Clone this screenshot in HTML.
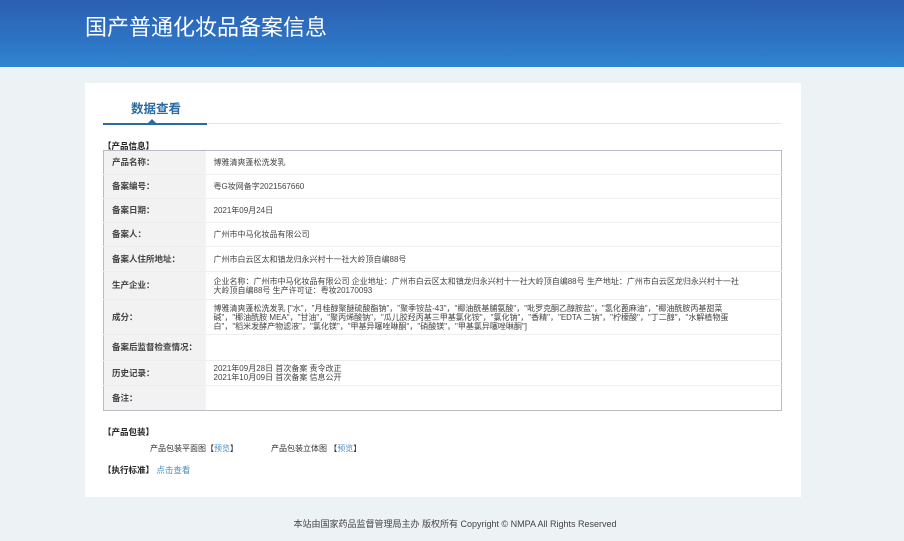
<!DOCTYPE html>
<html><head><meta charset="utf-8"><style>
*{margin:0;padding:0;box-sizing:border-box}
body{width:904px;height:541px;background:#edf2f4;font-family:"Liberation Sans","Noto Sans CJK SC",sans-serif;color:#333;position:relative;overflow:hidden}
.hd{position:absolute;left:0;top:0;width:904px;height:67px;background:linear-gradient(180deg,#2c5fb0 0%,#2d73c4 60%,#2e86d0 100%)}
.hd h1{position:absolute;left:85px;top:10px;font-size:22px;font-weight:normal;color:#fff;letter-spacing:0px}
.panel{position:absolute;left:85px;top:83px;width:716px;height:414px;background:#fff}
.tab{position:absolute;left:131px;top:98px;font-size:12.5px;font-weight:bold;color:#2d6aa3}
.tl{position:absolute;left:103px;top:123px;width:678px;height:1px;background:#e2e6ea}
.tl2{position:absolute;left:103px;top:123px;width:104px;height:2px;background:#2d6aa3}
.tri{position:absolute;left:148px;top:119px;width:0;height:0;border-left:4px solid transparent;border-right:4px solid transparent;border-bottom:4px solid #2d6aa3}
.sec{position:absolute;font-size:8.5px;font-weight:bold;color:#222}
table{position:absolute;left:103px;top:150px;width:679px;border-collapse:collapse;border:1px solid #b9bcc4;font-size:8px}
td{border-bottom:1px solid #eceef0;vertical-align:middle;line-height:9px}
td.l{width:102px;background:#f2f2f2;font-weight:bold;padding-left:8px;color:#444;font-size:8.5px}
td.v{padding-left:8px;padding-right:40px;color:#444}
a{color:#4a8fc7;text-decoration:none}
.ft{position:absolute;left:0;top:517px;width:904px;text-align:center;font-size:9px;color:#444;padding-left:6px}
</style></head><body>
<div class="hd"><h1>国产普通化妆品备案信息</h1></div>
<div class="panel"></div>
<div class="tab">数据查看</div>
<div class="tl"></div><div class="tl2"></div><div class="tri"></div>
<div class="sec" style="left:103px;top:140px">【产品信息】</div>
<table>
<tr style="height:24px"><td class="l">产品名称：</td><td class="v">博雅清爽蓬松洗发乳</td></tr>
<tr style="height:24px"><td class="l">备案编号：</td><td class="v">粤G妆网备字2021567660</td></tr>
<tr style="height:24px"><td class="l">备案日期：</td><td class="v">2021年09月24日</td></tr>
<tr style="height:24px"><td class="l">备案人：</td><td class="v">广州市中马化妆品有限公司</td></tr>
<tr style="height:25px"><td class="l">备案人住所地址：</td><td class="v">广州市白云区太和镇龙归永兴村十一社大岭顶自编88号</td></tr>
<tr style="height:28px"><td class="l">生产企业：</td><td class="v">企业名称：广州市中马化妆品有限公司 企业地址：广州市白云区太和镇龙归永兴村十一社大岭顶自编88号 生产地址：广州市白云区龙归永兴村十一社大岭顶自编88号 生产许可证：粤妆20170093</td></tr>
<tr style="height:35px"><td class="l">成分：</td><td class="v">博雅清爽蓬松洗发乳 ["水"，"月桂醇聚醚硫酸酯钠"，"聚季铵盐-43"，"椰油酰基脯氨酸"，"吡罗克酮乙醇胺盐"，"氢化蓖麻油"，"椰油酰胺丙基甜菜碱"，"椰油酰胺 MEA"，"甘油"，"聚丙烯酸钠"，"瓜儿胶羟丙基三甲基氯化铵"，"氯化钠"，"香精"，"EDTA 二钠"，"柠檬酸"，"丁二醇"，"水解植物蛋白"，"稻米发酵产物滤液"，"氯化镁"，"甲基异噻唑啉酮"，"硝酸镁"，"甲基氯异噻唑啉酮"]</td></tr>
<tr style="height:26px"><td class="l">备案后监督检查情况：</td><td class="v"></td></tr>
<tr style="height:25px"><td class="l">历史记录：</td><td class="v">2021年09月28日 首次备案 责令改正<br>2021年10月09日 首次备案 信息公开</td></tr>
<tr style="height:25px"><td class="l" style="border-bottom:none">备注：</td><td class="v" style="border-bottom:none"></td></tr>
</table>
<div class="sec" style="left:103px;top:426px">【产品包装】</div>
<div style="position:absolute;left:150px;top:443px;font-size:8px">产品包装平面图【<a>预览</a>】</div>
<div style="position:absolute;left:271px;top:443px;font-size:8px">产品包装立体图 【<a>预览</a>】</div>
<div class="sec" style="left:103px;top:464px">【执行标准】 <a style="font-weight:normal">点击查看</a></div>
<div class="ft">本站由国家药品监督管理局主办 版权所有 Copyright © NMPA All Rights Reserved</div>
</body></html>
